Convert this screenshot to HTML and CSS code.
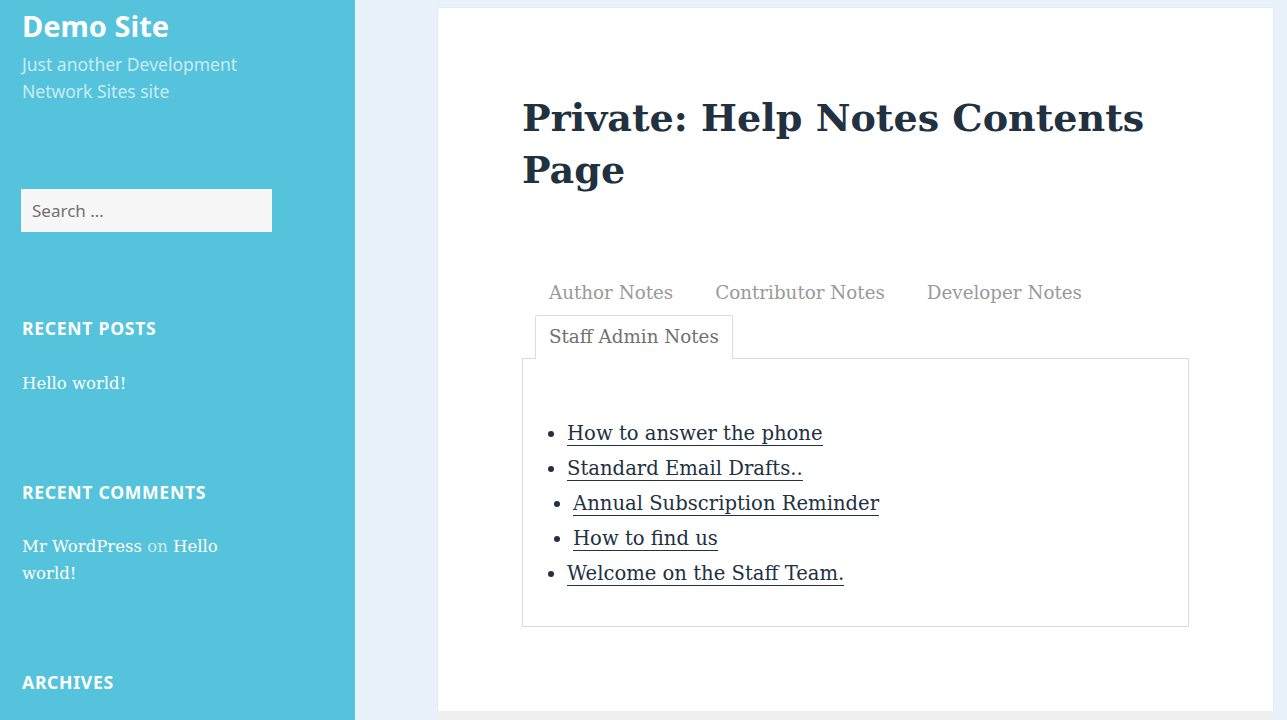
FILE: index.html
```html
<!DOCTYPE html>
<html lang="en">
<head>
<meta charset="utf-8">
<title>Private: Help Notes Contents Page – Demo Site</title>
<link rel="stylesheet" href="styles.css">
</head>
<body>
<div class="page">
  <aside class="sidebar">
    <header class="site-header">
      <p class="site-title">Demo Site</p>
      <p class="site-description">Just another Development Network Sites site</p>
    </header>
    <div class="widgets">
      <section class="widget widget-search">
        <input class="search-field" type="search" placeholder="Search …">
      </section>
      <section class="widget widget-posts">
        <h2 class="widget-title">Recent Posts</h2>
        <ul class="widget-list">
          <li><a href="#">Hello world!</a></li>
        </ul>
      </section>
      <section class="widget widget-comments">
        <h2 class="widget-title">Recent Comments</h2>
        <ul class="widget-list">
          <li><a href="#">Mr WordPress</a> <span class="muted">on</span> <a href="#">Hello world!</a></li>
        </ul>
      </section>
      <section class="widget widget-archives">
        <h2 class="widget-title">Archives</h2>
      </section>
    </div>
  </aside>
  <main class="content">
    <article class="entry">
      <h1 class="entry-title">Private: Help Notes Contents Page</h1>
      <div class="tabs">
        <ul class="tab-nav">
          <li class="tab"><a href="#">Author Notes</a></li>
          <li class="tab"><a href="#">Contributor Notes</a></li>
          <li class="tab"><a href="#">Developer Notes</a></li>
          <li class="tab active"><a href="#">Staff Admin Notes</a></li>
        </ul>
        <div class="tab-panel">
          <ul class="notes">
            <li><a href="#">How to answer the phone</a></li>
            <li><a href="#">Standard Email Drafts..</a></li>
            <li class="shifted"><a href="#">Annual Subscription Reminder</a></li>
            <li class="shifted"><a href="#">How to find us</a></li>
            <li><a href="#">Welcome on the Staff Team.</a></li>
          </ul>
        </div>
      </div>
    </article>
    <div class="after-entry"></div>
  </main>
</div>
</body>
</html>
```

FILE: styles.css
```css
* { box-sizing: border-box; }
html, body { margin: 0; padding: 0; }
body {
  background: #e9f2f9;
  color: #22313f;
  font-family: "DejaVu Serif", serif;
  overflow: hidden;
}
a { color: inherit; text-decoration: none; }
p, h1, h2, ul { margin: 0; padding: 0; }

.page {
  display: flex;
  min-height: 720px;
}

/* Sidebar */
.sidebar {
  width: 355px;
  flex: none;
  background: #55c3dc;
  min-height: 720px;
  padding: 6px 0 0 22px;
}
.site-title {
  font-family: "Noto Sans", sans-serif;
  font-weight: 700;
  font-size: 29px;
  line-height: 40px;
  color: #fff;
}
.site-description {
  font-family: "Noto Sans", sans-serif;
  font-size: 17.5px;
  line-height: 27px;
  color: rgba(255, 255, 255, 0.7);
  width: 240px;
  margin-top: 5px;
}
.widgets { width: 252px; margin-left: -1px; }
.widget-search { margin-top: 84px; }
.search-field {
  display: block;
  width: 251px;
  height: 43px;
  border: 0;
  background: #f7f7f7;
  padding: 0 11px;
  font-family: "Noto Sans", sans-serif;
  font-size: 17px;
  color: #707070;
  outline: none;
}
.search-field::placeholder { color: #707070; }
.widget { padding-left: 1px; }
.widget.widget-search { padding-left: 0; }
.widget-title {
  font-family: "Noto Sans", sans-serif;
  font-weight: 700;
  font-size: 17.6px;
  letter-spacing: 0.04em;
  text-transform: uppercase;
  color: #fff;
  line-height: 24px;
  margin-top: 83px;
}
.widget-posts .widget-title { margin-top: 84px; }
.widget-list {
  list-style: none;
  font-size: 16.5px;
  line-height: 27px;
  color: #fff;
  margin-top: 29.5px;
  max-width: 240px;
}
.widget-list .muted { color: rgba(255, 255, 255, 0.7); }

/* Main content */
.content {
  flex: 1;
  padding: 8px 14px 0 83px;
  display: flex;
  flex-direction: column;
}
.entry {
  background: #fff;
  box-shadow: 0 0 1px rgba(0, 0, 0, 0.15);
  padding: 84px 84px 84px 84px;
  min-height: 703px;
}
.entry-title {
  font-size: 38.1px;
  font-weight: 700;
  line-height: 52px;
  color: #22313f;
}
.tabs { margin-top: 74px; }
.tab-nav {
  list-style: none;
  display: flex;
  flex-wrap: wrap;
  padding-left: 13px;
}
.tab {
  margin: 1px 14px 0 0;
  border: 1px solid transparent;
  border-bottom: 0;
  border-radius: 2px 2px 0 0;
}
.tab a {
  display: block;
  padding: 0 13px 0 13px;
  line-height: 42px;
  font-size: 18.3px;
  color: #999999;
}
.tab.active {
  border-color: #dcdcdc;
  background: #fff;
  margin-bottom: -1px;
  padding-bottom: 1px;
  position: relative;
  z-index: 1;
}
.tab.active a { color: #707070; }
.tab-panel {
  border: 1px solid #dcdcdc;
  padding: 57px 20px 35px 25px;
}
.notes {
  list-style: disc;
  padding-left: 19px;
  font-size: 19.6px;
  line-height: 35px;
}
.notes a { box-shadow: 0 1px 0 0 #22313f; }
.notes .shifted { margin-left: 6px; }
.after-entry {
  background: #efefef;
  height: 40px;
}
```
